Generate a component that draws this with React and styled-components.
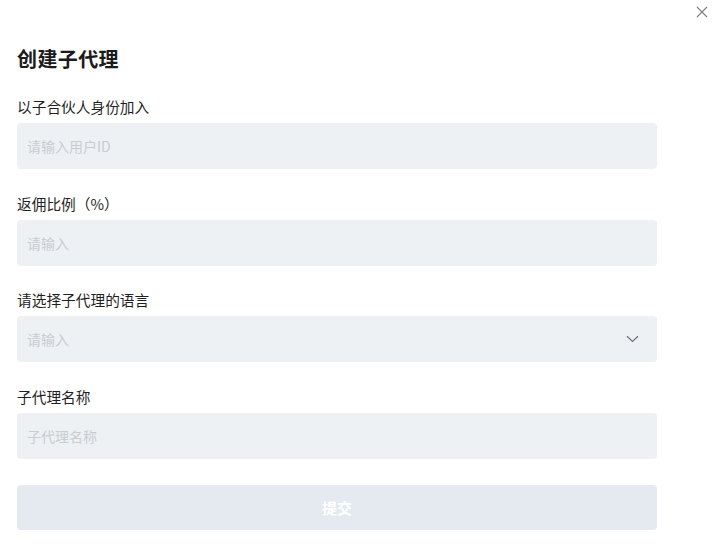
import React from "react"
import styled, { createGlobalStyle } from "styled-components"

const GlobalStyle = createGlobalStyle`
  html, body {
    margin: 0;
    padding: 0;
    background: #ffffff;
  }
  body {
    font-family: "Noto Sans CJK SC", "Noto Sans", sans-serif;
    color: #1a1a1a;
  }
`

const Modal = styled.div`
  position: relative;
  width: 714px;
  height: 550px;
  box-sizing: border-box;
  padding: 44px 57px 0 17px;
  background: #ffffff;
`

const CloseButton = styled.button`
  position: absolute;
  top: 5px;
  right: 5px;
  width: 14px;
  height: 14px;
  padding: 0;
  border: none;
  background: transparent;
  display: flex;
  align-items: center;
  justify-content: center;
  cursor: pointer;
`

const Title = styled.h2`
  margin: 0 0 22px;
  font-size: 20px;
  line-height: 30px;
  font-weight: 700;
  color: #1b1b1b;
  letter-spacing: 0.4px;
`

const Form = styled.form`
  display: flex;
  flex-direction: column;
`

const Field = styled.div`
  display: flex;
  flex-direction: column;
  gap: 5px;
  margin-bottom: 23.7px;
`

const Label = styled.label`
  font-size: 14.7px;
  line-height: 22px;
  color: #1f1f1f;
`

const InputBox = styled.div`
  height: 46px;
  border-radius: 4px;
  background: #edf1f4;
  display: flex;
  align-items: center;
  padding: 0 18px 0 10px;
`

const Input = styled.input`
  flex: 1;
  min-width: 0;
  border: none;
  outline: none;
  background: transparent;
  font-family: inherit;
  font-size: 14px;
  color: #1a1a1a;
  padding: 0;

  &::placeholder {
    color: #c9ccd1;
  }
`

const SubmitButton = styled.button`
  margin-top: 2px;
  height: 45px;
  border: none;
  border-radius: 4px;
  background: #e5e9f0;
  color: #ffffff;
  font-family: inherit;
  font-size: 15px;
  font-weight: 700;
  cursor: not-allowed;
`

const CloseIcon = () => (
  <svg width="12" height="12" viewBox="0 0 12 12" fill="none">
    <path d="M1 1L11 11M11 1L1 11" stroke="#7a7d82" strokeWidth="1.1" />
  </svg>
)

const ChevronDown = () => (
  <svg width="13" height="8" viewBox="0 0 13 8" fill="none">
    <path d="M1 1.2L6.5 6.5L12 1.2" stroke="#6f7378" strokeWidth="1.2" />
  </svg>
)

const fields = [
  { label: "以子合伙人身份加入", placeholder: "请输入用户ID" },
  { label: "返佣比例（%）", placeholder: "请输入" },
  { label: "请选择子代理的语言", placeholder: "请输入", select: true },
  { label: "子代理名称", placeholder: "子代理名称" },
]

const App = () => {
  return (
    <>
      <GlobalStyle />
      <Modal>
        <CloseButton aria-label="关闭">
          <CloseIcon />
        </CloseButton>
        <Title>创建子代理</Title>
        <Form onSubmit={(e) => e.preventDefault()}>
          {fields.map((f) => (
            <Field key={f.label}>
              <Label>{f.label}</Label>
              <InputBox>
                <Input placeholder={f.placeholder} readOnly={f.select} />
                {f.select && <ChevronDown />}
              </InputBox>
            </Field>
          ))}
          <SubmitButton type="submit">提交</SubmitButton>
        </Form>
      </Modal>
    </>
  )
}

export default App
